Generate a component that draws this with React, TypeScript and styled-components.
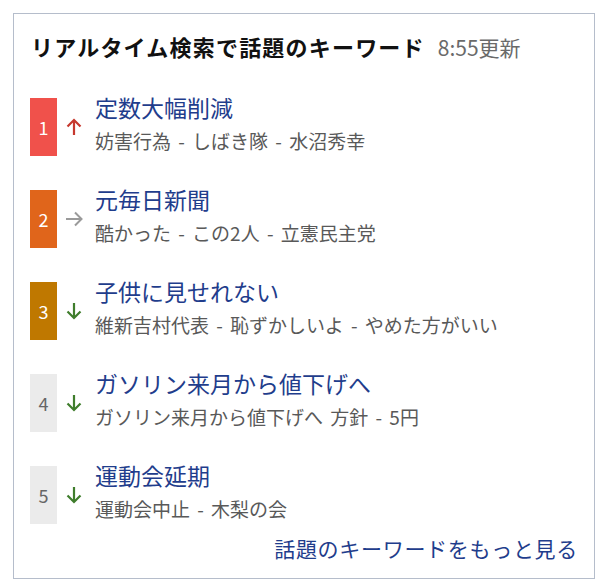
import styled, { createGlobalStyle } from 'styled-components';

const GlobalStyle = createGlobalStyle`
  body {
    margin: 0;
    background: #fff;
    font-family: "Noto Sans CJK JP", "Noto Sans", sans-serif;
  }
`;

type Trend = 'up' | 'flat' | 'down';

const KEYWORDS: { rank: number; title: string; sub: string; trend: Trend }[] = [
  { rank: 1, title: '定数大幅削減', sub: '妨害行為 - しばき隊 - 水沼秀幸', trend: 'up' },
  { rank: 2, title: '元毎日新聞', sub: '酷かった - この2人 - 立憲民主党', trend: 'flat' },
  { rank: 3, title: '子供に見せれない', sub: '維新吉村代表 - 恥ずかしいよ - やめた方がいい', trend: 'down' },
  { rank: 4, title: 'ガソリン来月から値下げへ', sub: 'ガソリン来月から値下げへ 方針 - 5円', trend: 'down' },
  { rank: 5, title: '運動会延期', sub: '運動会中止 - 木梨の会', trend: 'down' },
];

const RANK_BG: Record<number, string> = {
  1: '#f0514b',
  2: '#e0651b',
  3: '#bf7800',
};

function TrendIcon({ trend }: { trend: Trend }) {
  if (trend === 'up') {
    return (
      <svg width="16" height="18" viewBox="0 0 16 18" fill="none" stroke="#c6382e" strokeWidth="2.2">
        <path d="M8 17V2.5M1.5 8.5L8 2l6.5 6.5" />
      </svg>
    );
  }
  if (trend === 'flat') {
    return (
      <svg width="17" height="16" viewBox="0 0 17 16" fill="none" stroke="#9a9a9a" strokeWidth="2">
        <path d="M0 8h15M9 1.5L15.5 8 9 14.5" />
      </svg>
    );
  }
  return (
    <svg width="16" height="18" viewBox="0 0 16 18" fill="none" stroke="#3f7d2c" strokeWidth="2.2">
      <path d="M8 1v14.5M1.5 9.5L8 16l6.5-6.5" />
    </svg>
  );
}

export default function App() {
  return (
    <>
      <GlobalStyle />
      <Page>
        <Panel>
          <Header>
            <Title>リアルタイム検索で話題のキーワード</Title>
            <Updated>8:55更新</Updated>
          </Header>

          <List>
            {KEYWORDS.map((item) => (
              <Row key={item.rank}>
                <Rank $bg={RANK_BG[item.rank]}>{item.rank}</Rank>
                <ArrowSlot>
                  <TrendIcon trend={item.trend} />
                </ArrowSlot>
                <Texts>
                  <Keyword href="#">{item.title}</Keyword>
                  <Related>{item.sub}</Related>
                </Texts>
              </Row>
            ))}
          </List>

          <Footer>
            <MoreLink href="#">話題のキーワードをもっと見る</MoreLink>
          </Footer>
        </Panel>
      </Page>
    </>
  );
}

const Page = styled.div`
  padding: 13px;
`;

const Panel = styled.section`
  width: 582px;
  box-sizing: border-box;
  border: 1px solid #b5bdcb;
  padding: 17px 16px 15px 16px;
`;

const Header = styled.div`
  display: flex;
  align-items: baseline;
  line-height: 30px;
  padding-left: 1px;
`;

const Title = styled.h2`
  margin: 0;
  font-size: 22px;
  font-weight: 700;
  letter-spacing: 1.2px;
  color: #111;
`;

const Updated = styled.span`
  margin-left: 13px;
  font-size: 21px;
  color: #6a6a6a;
`;

const List = styled.ol`
  list-style: none;
  margin: 33px 0 0;
  padding: 0;
  display: flex;
  flex-direction: column;
  gap: 31px;
`;

const Row = styled.li`
  display: flex;
  align-items: flex-start;
`;

const Rank = styled.div<{ $bg?: string }>`
  flex: none;
  margin-top: 3px;
  width: 27px;
  height: 58px;
  display: flex;
  align-items: center;
  justify-content: center;
  background: ${(p) => p.$bg ?? '#ebebeb'};
  color: ${(p) => (p.$bg ? '#fff' : '#666')};
  font-size: 18px;
`;

const ArrowSlot = styled.div`
  flex: none;
  width: 38px;
  height: 58px;
  margin-top: 3px;
  display: flex;
  align-items: center;
  padding-left: 9px;
  box-sizing: border-box;
`;

const Texts = styled.div`
  display: flex;
  flex-direction: column;
  gap: 10px;
`;

const Keyword = styled.a`
  font-size: 23px;
  line-height: 24px;
  color: #1f3d8c;
  text-decoration: none;
`;

const Related = styled.div`
  font-size: 19px;
  line-height: 24px;
  word-spacing: 3px;
  color: #595959;
`;

const Footer = styled.div`
  margin-top: 9px;
  display: flex;
  justify-content: flex-end;
  line-height: 30px;
`;

const MoreLink = styled.a`
  font-size: 21px;
  letter-spacing: 0.7px;
  color: #1f3d8c;
  text-decoration: none;
`;
